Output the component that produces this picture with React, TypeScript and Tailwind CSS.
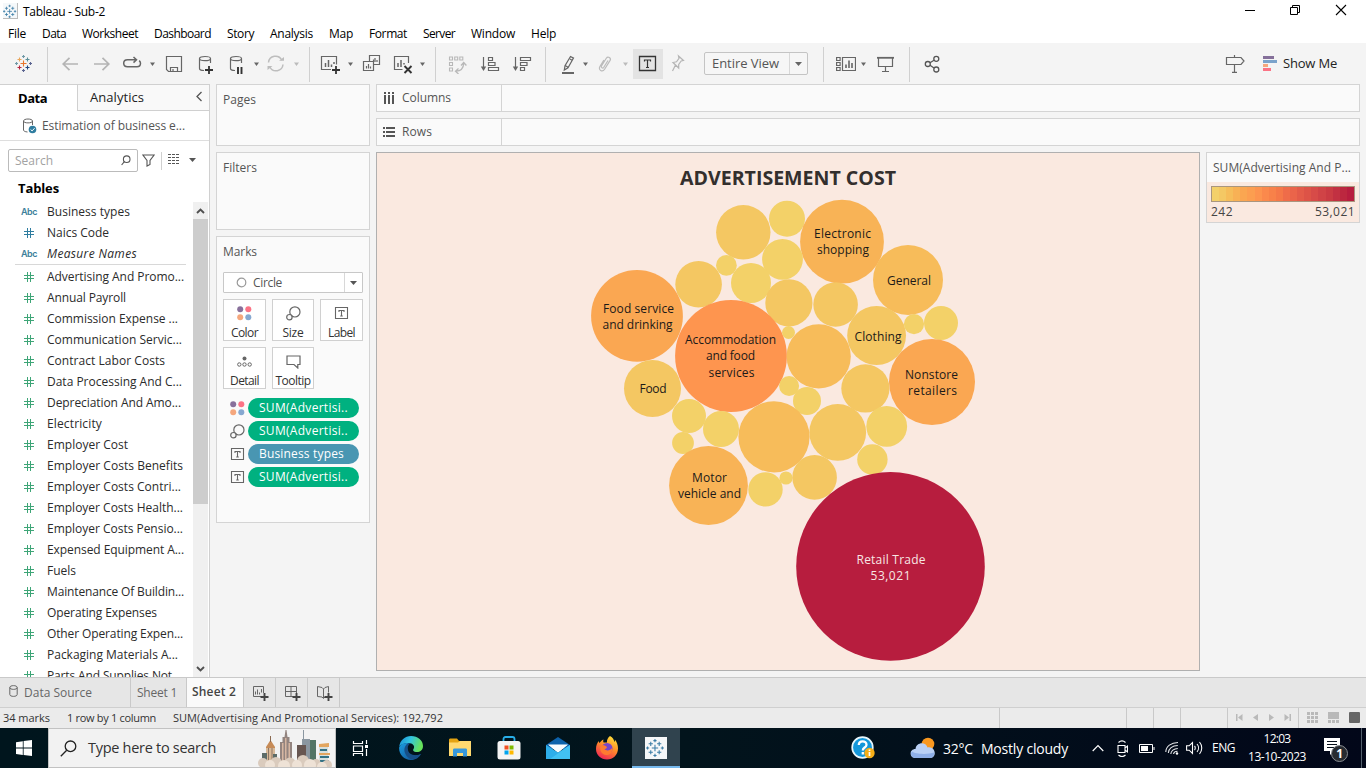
import React, { useLayoutEffect, useRef } from "react";

/* Text that spreads its letters to fill a given width. */
function Fit({ w, className = "", children }: { w: number; className?: string; children: string }) {
  const ref = useRef<HTMLSpanElement>(null);
  useLayoutEffect(() => {
    const el = ref.current;
    if (!el) return;
    el.style.letterSpacing = "0px";
    const natural = el.getBoundingClientRect().width;
    el.style.letterSpacing = `${(w - natural) / children.length}px`;
  }, [w, children]);
  return (
    <span ref={ref} className={`inline-block shrink-0 whitespace-pre ${className}`}>
      {children}
    </span>
  );
}

function Icon({ className = "", w = 20, h = 20, children }: { className?: string; w?: number; h?: number; children: React.ReactNode }) {
  return (
    <svg className={`shrink-0 ${className}`} width={w} height={h} viewBox={`0 0 ${w} ${h}`} fill="none" stroke="#666" strokeWidth="1.2">
      {children}
    </svg>
  );
}

function Caret({ className = "", color = "#666" }: { className?: string; color?: string }) {
  return (
    <svg className={`shrink-0 ${className}`} width="5" height="20" viewBox="0 0 5 20">
      <path d="M0 8.5h5L2.5 12z" fill={color} />
    </svg>
  );
}

const Sep = ({ className = "" }: { className?: string }) => <div className={`-mt-[7px] h-[35px] w-px shrink-0 bg-[#d0d0d0] ${className}`} />;

function TableauMark({ size, mono, className = "" }: { size: number; mono?: boolean; className?: string }) {
  const plus = (x: number, y: number, r: number, c: string) => (
    <path key={`${x}-${y}`} d={`M${x - r} ${y}h${2 * r}M${x} ${y - r}v${2 * r}`} stroke={mono ? "#3a7ca5" : c} strokeWidth={mono ? 1 : 1.1} />
  );
  return (
    <svg className={`shrink-0 ${className}`} width={size} height={size} viewBox="0 0 18 18" fill="none">
      {plus(8.5, 9.5, 3, "#e8762c")}
      {plus(4.5, 5.5, 2, "#e8a55a")}
      {plus(12.5, 5.5, 2, "#5b8f98")}
      {plus(4.5, 13.5, 2, "#b5243e")}
      {plus(12.5, 13.5, 2, "#1f457e")}
      {plus(8.5, 2.5, 1.5, "#7099a6")}
      {plus(8.5, 16.5, 1.5, "#5b6591")}
      {plus(1.5, 9.5, 1.5, "#7099a6")}
      {plus(15.5, 9.5, 1.5, "#5b6591")}
    </svg>
  );
}

const MENU: [string, number, string][] = [
  ["File", 18, "ml-[8px]"], ["Data", 24, "ml-[16px]"], ["Worksheet", 56, "ml-[16px]"], ["Dashboard", 57, "ml-[16px]"],
  ["Story", 27, "ml-[16px]"], ["Analysis", 43, "ml-[16px]"], ["Map", 24, "ml-[16px]"], ["Format", 38, "ml-[16px]"],
  ["Server", 32, "ml-[16px]"], ["Window", 44, "ml-[16px]"], ["Help", 25, "ml-[16px]"],
];

function TitleAndMenu() {
  return (
    <div className="h-[43px] bg-white text-[12px] text-black">
      <div className="flex h-[22px] items-start">
        <div className="ml-[3px] mt-[3px] flex h-[16px] w-[15px] items-center justify-center border-b border-r border-[#bbb] bg-[#f5f8fa]">
          <TableauMark size={14} mono />
        </div>
        <Fit w={82} className="ml-[5px] mt-[3px] leading-[17px]">Tableau - Sub-2</Fit>
        <Icon className="ml-auto mt-[5px]" w={12} h={12}><path d="M1 5.5h10" stroke="#000" strokeWidth="1" /></Icon>
        <Icon className="ml-[33px] mt-[4px]" w={12} h={12}><path d="M1.5 3.5h7v7h-7zM3.5 3.5v-2h7v7h-2" stroke="#000" strokeWidth="1" /></Icon>
        <Icon className="ml-[34px] mr-[19px] mt-[4px]" w={12} h={12}><path d="M1 1l10 10M11 1L1 11" stroke="#000" strokeWidth="1.1" /></Icon>
      </div>
      <div className="flex h-[21px] items-start">
        {MENU.map(([t, w, c]) => (
          <Fit key={t} w={w} className={`leading-[23px] ${c}`}>{t}</Fit>
        ))}
      </div>
    </div>
  );
}

const Plus = ({ x, y }: { x: number; y: number }) => <path d={`M${x - 4} ${y}h8M${x} ${y - 4}v8`} stroke="#333" strokeWidth="1.8" />;

function Toolbar() {
  return (
    <div className="flex h-[41px] items-start bg-[#f4f4f4] pt-[11px]">
      <TableauMark size={18} className="ml-[15px]" />
      <Sep className="ml-[14px]" />
      <Icon className="ml-[12px]"><path d="M18 10H3.5M9.5 3.8L3.2 10l6.3 6.2" stroke="#b4b4b4" strokeWidth="1.7" /></Icon>
      <Icon className="ml-[12px]"><path d="M2 10h14.500M10.500 3.800L16.800 10l-6.300 6.200" stroke="#b4b4b4" strokeWidth="1.7" /></Icon>
      <Icon className="ml-[10px]"><path d="M14.500 5.800H5.500c-2.500 0-3.800 1.500-3.800 3.500s1.300 3.500 3.800 3.500h9.500c2.200 0 3.500-1.400 3.500-3.500 0-1.200-.5-2-1.300-2.700M11.500 3l3 2.800-3 2.800" strokeWidth="1.500" /></Icon>
      <Caret className="ml-[8px]" />
      <Icon className="ml-[9px]"><path d="M2.500 2.500h15v15h-13l-2-2zM6.500 17v-3.500h7V17M9 15v2" /></Icon>
      <Icon className="ml-[11px]">
        <path d="M15.500 9V4.500M4.500 4.500v10c0 1.200 2 2 4.500 2M4.500 4.500c0-1.300 2.400-2 5.500-2s5.500.7 5.500 2-2.400 2.200-5.500 2.200-5.500-.9-5.500-2.200z" />
        <Plus x={14} y={16} />
      </Icon>
      <Icon className="ml-[12px]">
        <path d="M14.500 9V4.500M3.500 4.500v10c0 1.200 2 2 4.500 2M3.500 4.500c0-1.300 2.400-2 5.500-2s5.500.7 5.500 2-2.400 2.200-5.500 2.200-5.500-.9-5.500-2.200z" />
        <path d="M11 13v7M14.500 13v7" stroke="#333" strokeWidth="1.900" />
      </Icon>
      <Caret className="ml-[7px]" />
      <Icon className="ml-[7px]">
        <path d="M2.500 8.500A7 7 0 0 1 15.800 6.200M17 10.500A7 7 0 0 1 3.800 13" stroke="#bdbdbd" strokeWidth="1.500" />
        <path d="M13 6.800h5V3zM6.500 12h-5v4z" fill="#bdbdbd" stroke="none" />
      </Icon>
      <Caret className="ml-[8px]" color="#bbb" />
      <Sep className="ml-[10px]" />
      <Icon className="ml-[10px]">
        <path d="M11 15.500H1.500v-13h15v8" /><path d="M5.500 13V9M8.500 13V6M11.500 13v-2.500M14 10V8" strokeWidth="1.500" /><Plus x={16} y={16} />
      </Icon>
      <Caret className="ml-[8px]" />
      <Icon className="ml-[9px]">
        <path d="M7.500 7V1.500h10v9h-5.500M1.500 7.500h10v9h-10zM4.500 14.500v-2.500M6.500 14.500V10M8.500 14.500v-2M11.500 7V5.500M13 8V4M15 8V6" />
      </Icon>
      <Icon className="ml-[11px]">
        <path d="M9.500 15.500h-8v-13h14v6.500" /><path d="M5 13V9M8 13V6M11 10.500V9" strokeWidth="1.500" /><path d="M11.500 12l7 7M18.500 12l-7 7" stroke="#333" strokeWidth="1.900" />
      </Icon>
      <Caret className="ml-[7px]" />
      <Sep className="ml-[10px]" />
      <Icon className="ml-[11px]">
        <path d="M2.500 3h3v3h-3zM7.700 3h3v3h-3zM12.800 3h3v3h-3zM2.500 8.500h3v3h-3zM2.500 14h3v3h-3z" stroke="#b8b8b8" strokeWidth="1.100" />
        <path d="M9 17.200c4.500-.2 7.500-3 7.700-8M11.500 14.500L8.500 17.200l3 2.800M14 11.500l2.700-3 2.700 3" stroke="#b8b8b8" strokeWidth="1.300" />
      </Icon>
      <Icon className="ml-[13px]">
        <path d="M3.500 3v12" /><path d="M.8 12.500h5.400L3.500 17z" fill="#666" stroke="none" />
        <path d="M8.500 3.500h4v3h-4zM8.500 8.500h6.500v3H8.500zM8.500 13.500h10v3h-10z" />
      </Icon>
      <Icon className="ml-[12px]">
        <path d="M3.500 3v12" /><path d="M.8 12.500h5.400L3.500 17z" fill="#666" stroke="none" />
        <path d="M8.500 3.500h10v3h-10zM8.500 8.500H15v3H8.500zM8.500 13.500h4v3h-4z" />
      </Icon>
      <Sep className="ml-[13px]" />
      <Icon className="ml-[12px]">
        <path d="M12.500 2.500l3 1.600-5.500 9.600-3.700 2.300.7-4.200zM7.200 11.500l2.900 1.700M12 5l2 1.200" /><path d="M4 19h12" strokeWidth="2" />
      </Icon>
      <Caret className="ml-[5px]" />
      <Icon className="ml-[7px]">
        <path d="M13 6.500l-4.200 6.800c-1 1.500-3.200.3-2.300-1.300l4.800-7.800c1.600-2.500 5.200-.3 3.800 2.200l-5.500 8.800c-2.200 3.400-6.700.7-4.700-2.700l4-6.500" stroke="#bbb" />
      </Icon>
      <Caret className="ml-[8px]" color="#bbb" />
      <div className="-mt-[5px] ml-[5px] h-[30px] w-[30px] bg-[#e3e3e3] pl-[5px] pt-[5px]">
        <Icon><path d="M1.500 2.500h16v14h-16z" stroke="#333" strokeWidth="1.300" /><path d="M6.500 7.500V6h6v1.500M9.500 6v7.500M8 13.500h3" stroke="#333" /></Icon>
      </div>
      <Icon className="ml-[4px]">
        <path d="M11.500 2l5 4.500-2.300.5-2.500 3.500v3.500L6 8.500l3.500-.7 2.500-3.500zM8.500 11L5.500 17" stroke="#b5b5b5" />
      </Icon>
      <div className="-mt-[2px] ml-[17px] flex h-[23px] w-[104px] rounded-[2px] border border-[#c4c4c4] bg-[#f6f6f6]">
        <Fit w={67} className="ml-[7px] text-[13px] leading-[20px] text-[#555]">Entire View</Fit>
        <div className="ml-[10px] flex flex-1 items-center justify-center border-l border-[#d8d8d8]">
          <svg width="7" height="4" viewBox="0 0 7 4"><path d="M0 0h7L3.500 4z" fill="#666" /></svg>
        </div>
      </div>
      <Sep className="ml-[15px]" />
      <Icon className="ml-[12px]">
        <path d="M.6 3.500h3.500v3H.6zM.6 8.500h3.500v3H.6zM.6 13.500h3.500v3H.6zM6.500 3.500h13v13h-13z" /><path d="M10 14v-3.500M13 14V6.500M16 14V9" strokeWidth="1.600" />
      </Icon>
      <Caret className="ml-[5px]" />
      <Icon className="ml-[10px]"><path d="M1 3.800h17" strokeWidth="1.800" /><path d="M2.500 4v8.500h14V4M9.500 12.500v5M6 17.500h7" /></Icon>
      <Sep className="ml-[13px]" />
      <Icon className="ml-[12px]">
        <g stroke="#555" strokeWidth="1.300"><circle cx="5.800" cy="10" r="2.500" /><circle cx="14.300" cy="4.800" r="2.500" /><circle cx="14.300" cy="15.500" r="2.500" /><path d="M8 8.700l4-2.500M8 11.300l4 2.700" /></g>
      </Icon>
      <Icon className="ml-auto"><path d="M9.500 1v2M1.500 3.500h14.500l3 3.500-3 3.500H1.500zM9.500 10.500v7.500M7 18.400h5" /></Icon>
      <div className="ml-[18px] mt-[2px] flex w-[14px] flex-col gap-px">
        <div className="h-[3px] w-[11px] bg-[#85709a]" />
        <div className="h-[3px] w-[14px] bg-[#7ba3cb]" />
        <div className="h-[3px] w-[5px] bg-[#f5a77d]" />
        <div className="h-[3px] w-[8px] bg-[#fb7385]" />
      </div>
      <Fit w={54} className="ml-[6px] mr-[29px] text-[13px] leading-[19px] text-[#222]">Show Me</Fit>
    </div>
  );
}

const HashIcon = ({ color }: { color: string }) => (
  <svg className="ml-[24px] mr-[13px] shrink-0" width="10" height="10" viewBox="0 0 10 10">
    <path d="M3.500 0v10M6.500 0v10M0 3.500h10M0 6.500h10" stroke={color} strokeWidth="1" />
  </svg>
);

const DIMENSIONS: [string, number, string][] = [["Business types", 83, "abc"], ["Naics Code", 62, "num"], ["Measure Names", 90, "italic"]];
const MEASURES: [string, number][] = [
  ["Advertising And Promo...", 137], ["Annual Payroll", 79], ["Commission Expense ...", 131], ["Communication Servic...", 135],
  ["Contract Labor Costs", 118], ["Data Processing And C...", 135], ["Depreciation And Amo...", 134], ["Electricity", 55],
  ["Employer Cost", 81], ["Employer Costs Benefits", 136], ["Employer Costs Contri...", 134], ["Employer Costs Health...", 136],
  ["Employer Costs Pensio...", 136], ["Expensed Equipment A...", 137], ["Fuels", 29], ["Maintenance Of Buildin...", 137],
  ["Operating Expenses", 110], ["Other Operating Expen...", 136], ["Packaging Materials A...", 131], ["Parts And Supplies Not ...", 137],
];

function DataPane() {
  return (
    <aside className="flex h-[593px] w-[210px] shrink-0 flex-col border-r border-t border-[#d0d0d0] bg-white">
      <div className="flex h-[26px] shrink-0">
        <div className="w-[77px]"><Fit w={29} className="ml-[18px] text-[13px] font-bold leading-[25px] text-black">Data</Fit></div>
        <div className="flex flex-1 items-start border-b border-l border-[#d0d0d0] bg-[#f9f9f9]">
          <Fit w={54} className="ml-[12px] text-[13px] leading-[25px] text-[#222]">Analytics</Fit>
          <svg className="ml-auto mr-[6px] mt-[6px]" width="8" height="11" viewBox="0 0 8 11"><path d="M6.500 1L2 5.500 6.500 10" fill="none" stroke="#555" strokeWidth="1.300" /></svg>
        </div>
      </div>
      <div className="flex h-[30px] shrink-0 items-center border-b border-[#dedede]">
        <svg className="ml-[22px] mt-px" width="15" height="16" viewBox="0 0 15 16" fill="none" stroke="#666">
          <path d="M10.500 7V3M1.500 3v9c0 1 1.500 1.800 4 2M1.500 3c0-1.200 2-2 4.500-2s4.500.8 4.500 2-2 1.900-4.500 1.900S1.500 4.200 1.500 3z" />
          <circle cx="10.500" cy="11.500" r="3.800" fill="#2f7da0" stroke="none" /><path d="M8.600 11.500l1.500 1.400 2.500-2.700" stroke="#fff" />
        </svg>
        <Fit w={143} className="ml-[5px] text-[12px] leading-[28px] text-[#555]">Estimation of business e...</Fit>
      </div>
      <div className="mt-[8px] flex h-[23px] shrink-0 items-center">
        <div className="ml-[8px] flex h-[23px] w-[130px] items-center rounded-[2px] border border-[#bbb]">
          <Fit w={38} className="ml-[6px] text-[12px] leading-[20px] text-[#a2a2a2]">Search</Fit>
          <svg className="ml-auto mr-[6px]" width="10" height="11" viewBox="0 0 10 11" fill="none" stroke="#555" strokeWidth="1.100"><circle cx="5.700" cy="4.200" r="3.300" /><path d="M3.400 6.700L.6 10" /></svg>
        </div>
        <svg className="ml-[4px]" width="13" height="13" viewBox="0 0 13 13" fill="none" stroke="#555" strokeWidth="1.100"><path d="M.9 1h11.200L8 6.500v4L5 12V6.500z" /></svg>
        <div className="ml-[6px] h-[18px] w-px bg-[#d0d0d0]" />
        <svg className="-mt-[3px] ml-[6px]" width="12" height="10" viewBox="0 0 12 10" stroke="#555"><path d="M0 .5h12M0 3.500h12M0 6.500h12M0 9.500h12" strokeDasharray="3 1" /></svg>
        <svg className="-mt-px ml-[9px]" width="7" height="4" viewBox="0 0 7 4"><path d="M0 0h7L3.500 4z" fill="#555" /></svg>
      </div>
      <Fit w={41} className="ml-[18px] mt-[7px] self-start text-[13px] font-bold leading-[18px] text-black">Tables</Fit>
      <div className="mt-[5px] flex min-h-0 flex-1">
        <div className="w-[193px] overflow-hidden text-[12px] text-[#2b2b2b]">
          <div className="-mt-px">
            {DIMENSIONS.map(([t, w, k]) => (
              <div key={t} className="flex h-[21px] items-center">
                {k === "num" ? <HashIcon color="#2f7da0" /> : <Fit w={16} className="ml-[21px] mr-[10px] pt-px font-[Inter] text-[9px] font-semibold text-[#3d7f9b]">Abc</Fit>}
                <Fit w={w} className={k === "italic" ? "italic leading-[21px]" : "leading-[21px]"}>{t}</Fit>
              </div>
            ))}
          </div>
          <div className="ml-[15px] mr-[7px] mb-px h-px bg-[#d8d8d8]" />
          {MEASURES.map(([t, w]) => (
            <div key={t} className="flex h-[21px] items-center">
              <HashIcon color="#3ea577" />
              <Fit w={w} className="leading-[21px]">{t}</Fit>
            </div>
          ))}
        </div>
        <div className="flex w-[15px] flex-col bg-[#f0f0f0]">
          <svg width="15" height="17" viewBox="0 0 15 17"><path d="M4 11l3.500-3.500L11 11" fill="none" stroke="#505050" strokeWidth="1.900" /></svg>
          <div className="h-[285px] bg-[#cdcdcd]" />
          <svg className="mt-auto" width="15" height="16" viewBox="0 0 15 16"><path d="M4 6l3.500 3.500L11 6" fill="none" stroke="#505050" strokeWidth="1.900" /></svg>
        </div>
      </div>
    </aside>
  );
}

const ColorDots = () => (
  <svg width="15" height="15" viewBox="0 0 15 15"><circle cx="3.200" cy="3.200" r="3" fill="#88709b" /><circle cx="11.300" cy="3.200" r="3" fill="#fb7385" /><circle cx="3.200" cy="11.300" r="3" fill="#f5a77d" /><circle cx="11.300" cy="11.300" r="3" fill="#86a8d0" /></svg>
);
const SizeIcon = () => (
  <svg width="15" height="15" viewBox="0 0 15 15" fill="none" stroke="#666" strokeWidth="1.200"><circle cx="8.900" cy="5.900" r="5.100" /><circle cx="3.400" cy="11.200" r="2.700" fill="#fafafa" /></svg>
);
const TextIcon = () => (
  <svg width="15" height="15" viewBox="0 0 15 15" fill="none" stroke="#666" strokeWidth="1.100"><path d="M1.500 1.500h12v11h-12zM5 6V4.500h5V6M7.500 4.500V10M6.200 10h2.600" /></svg>
);

function MarkButton({ label, w, icon }: { label: string; w: number; icon: React.ReactNode }) {
  return (
    <div className="flex h-[42px] flex-col items-center border border-[#d0d0d0] bg-white pt-[6px]">
      {icon}
      <Fit w={w} className="mt-[4px] text-[12px] leading-[15px] text-[#333]">{label}</Fit>
    </div>
  );
}

const card = "border border-[#d4d4d4] bg-[#fafafa]";
const PILLS: [string, number, React.ReactNode, string][] = [
  ["SUM(Advertisi..", 89, <ColorDots />, "bg-[#00b180]"], ["SUM(Advertisi..", 89, <SizeIcon />, "bg-[#00b180]"],
  ["Business types", 85, <TextIcon />, "bg-[#4996b2]"], ["SUM(Advertisi..", 89, <TextIcon />, "bg-[#00b180]"],
];

function Cards() {
  return (
    <div className="ml-[6px] flex w-[154px] shrink-0 flex-col gap-[6px] text-[12px] text-[#555]">
      <div className={`h-[62px] ${card}`}><Fit w={33} className="ml-[6px] mt-[6px] leading-[18px]">Pages</Fit></div>
      <div className={`h-[78px] ${card}`}><Fit w={34} className="ml-[6px] mt-[6px] leading-[18px]">Filters</Fit></div>
      <div className={`flex h-[287px] flex-col px-[6px] ${card}`}>
        <Fit w={34} className="mt-[6px] self-start leading-[18px]">Marks</Fit>
        <div className="mt-[11px] flex h-[21px] items-center rounded-[1px] border border-[#c8c8c8] bg-white">
          <svg className="ml-[12px]" width="11" height="11" viewBox="0 0 11 11"><circle cx="5.500" cy="5.500" r="4.300" fill="none" stroke="#999" strokeWidth="1.200" /></svg>
          <Fit w={29} className="ml-[6px] leading-[19px]">Circle</Fit>
          <div className="ml-auto flex h-full w-[18px] items-center justify-center border-l border-[#d8d8d8]">
            <svg width="7" height="4" viewBox="0 0 7 4"><path d="M0 0h7L3.500 4z" fill="#555" /></svg>
          </div>
        </div>
        <div className="mt-[6px] grid grid-cols-[43px_42px_43px] gap-[6px]">
          <MarkButton label="Color" w={27} icon={<ColorDots />} />
          <MarkButton label="Size" w={21} icon={<SizeIcon />} />
          <MarkButton label="Label" w={27} icon={<TextIcon />} />
          <MarkButton label="Detail" w={29} icon={<svg width="15" height="15" viewBox="0 0 15 15"><circle cx="7.500" cy="4.500" r="2" fill="#666" /><g fill="none" stroke="#666"><circle cx="2.300" cy="10.500" r="1.700" /><circle cx="7.500" cy="10.500" r="1.700" /><circle cx="12.700" cy="10.500" r="1.700" /></g></svg>} />
          <MarkButton label="Tooltip" w={35} icon={<svg width="15" height="15" viewBox="0 0 15 15"><path d="M1 2h13v8.500h-2.200V14L8 10.500H1z" fill="none" stroke="#666" strokeWidth="1.200" /></svg>} />
        </div>
        <div className="mt-[9px] flex flex-col gap-[3px]">
          {PILLS.map(([t, w, icon, bg], i) => (
            <div key={i} className="flex h-[20px] items-center pl-[7px]">
              {icon}
              <div className={`ml-[3px] h-[20px] w-[111px] rounded-full pl-[11px] ${bg}`}>
                <Fit w={w} className="text-[12px] font-medium leading-[19px] text-white">{t}</Fit>
              </div>
            </div>
          ))}
        </div>
      </div>
    </div>
  );
}

const Y = "#f3d168", G = "#f4c762", A = "#f7bc5a", O = "#f8b356", D = "#faa752";
const BUBBLES: [number, number, number, string][] = [
  [743.3, 232.3, 27.200, G], [787, 218.700, 18, Y], [842, 241.700, 41.900, O], [782.500, 259.300, 20.400, Y], [726.400, 265.400, 10.400, Y],
  [751, 283, 20, Y], [698.600, 284.300, 23.300, G], [637, 315.900, 45.900, D], [908, 280, 35, A], [788.900, 302.900, 23.600, G],
  [835.600, 304.500, 22.300, G], [731, 356, 55.900, "#fe954f"], [876.600, 335.500, 29.400, G], [914, 324.100, 10.100, Y], [941, 323, 17, Y],
  [788.500, 332.500, 6.500, Y], [818.700, 356.400, 32.100, A], [932, 382, 43, D], [652.500, 388.500, 28.500, G], [789.100, 386, 10, Y],
  [807, 401, 14, Y], [865.400, 388.400, 24.100, G], [689, 416, 17, Y], [721, 429, 18, Y], [774, 436.800, 35.600, A],
  [837.700, 432.400, 28.400, G], [886.700, 426.400, 20.400, Y], [683, 443, 10.900, Y], [708.500, 485.500, 39.400, O], [765.500, 489.400, 17.200, Y],
  [786, 478, 6.600, Y], [814.600, 477.400, 22.300, G], [872.400, 459.500, 15.200, Y], [890.500, 566.400, 94.300, "#b71d3e"],
];
const LABELS: [string, number, number, number][] = [
  ["Electronic", 842.500, 238, 57], ["shopping", 843, 254, 52], ["General", 909, 285, 44], ["Food service", 638.500, 313, 71], ["and drinking", 637.500, 329, 70],
  ["Accommodation", 730.500, 344, 91], ["and food", 730.500, 360, 49], ["services", 731.500, 377, 46], ["Clothing", 878, 341, 47], ["Nonstore", 931.500, 379, 53],
  ["retailers", 932.500, 395, 49], ["Food", 653, 393, 27], ["Motor", 709.500, 482, 35], ["vehicle and", 709.500, 498, 63],
  ["Retail Trade", 891, 564, 69], ["53,021", 890.500, 580, 40],
];

function View() {
  return (
    <div className="h-[519px] border border-[#b0b0b0] bg-[#fae9e0]">
      <svg width="822" height="517" viewBox="377 153 822 517" className="block font-[Open_Sans]">
        <text x="680" y="185" fontSize="19.500" fontWeight="bold" fill="#332f2d" textLength="216" lengthAdjust="spacingAndGlyphs">ADVERTISEMENT COST</text>
        {BUBBLES.map(([x, y, r, c], i) => <circle key={i} cx={x} cy={y} r={r} fill={c} />)}
        {LABELS.map(([t, x, y, w], i) => (
          <text key={t} x={x - w / 2} y={y} fontSize="12" textLength={w} fill={i > 13 ? "#f7e6e4" : "#1c1a18"}>{t}</text>
        ))}
      </svg>
    </div>
  );
}

function Shelf({ label, w, icon }: { label: string; w: number; icon: React.ReactNode }) {
  return (
    <div className={`flex h-[28px] ${card}`}>
      <div className="flex w-[125px] items-center border-r border-[#d4d4d4] pl-[6px]">
        {icon}
        <Fit w={w} className="ml-[7px] text-[12px] leading-[24px] text-[#555]">{label}</Fit>
      </div>
    </div>
  );
}

const RAMP = ["bg-[#f3d06a]", "bg-[#f4c864]", "bg-[#f6bd5a]", "bg-[#f8b155]", "bg-[#faa651]", "bg-[#fc9e50]", "bg-[#fd944f]", "bg-[#fb894c]", "bg-[#f88149]", "bg-[#f57848]", "bg-[#ef6c49]", "bg-[#ea644a]", "bg-[#e35b49]", "bg-[#dd5347]", "bg-[#d74b48]", "bg-[#d04346]", "bg-[#ca3b43]", "bg-[#c23142]", "bg-[#bc273f]", "bg-[#b71d3e]"];

function Workspace() {
  return (
    <div className="ml-[6px] flex w-[984px] flex-col gap-[6px]">
      <Shelf label="Columns" w={49} icon={<svg width="12" height="12" viewBox="0 0 12 12" stroke="#555" strokeWidth="2"><path d="M2 0v2M6 0v2M10 0v2M2 3v9M6 3v9M10 3v9" /></svg>} />
      <Shelf label="Rows" w={30} icon={<svg width="12" height="12" viewBox="0 0 12 12" stroke="#555" strokeWidth="2"><path d="M0 2h2M0 6h2M0 10h2M3 2h9M3 6h9M3 10h9" /></svg>} />
      <div className="grid grid-cols-[824px_154px] items-start gap-[6px]">
        <View />
        <div className={`flex h-[71px] flex-col ${card}`}>
          <Fit w={138} className="ml-[6px] mt-[6px] self-start text-[12px] leading-[18px] text-[#555]">SUM(Advertising And P...</Fit>
          <div className="mt-auto h-[40px] bg-[#fae9e0] px-[4px] pt-[4px]">
            <div className="flex h-[16px] border border-[#a9967f]">
              {RAMP.map((c) => <div key={c} className={`flex-1 ${c}`} />)}
            </div>
            <div className="flex justify-between text-[12px] leading-[19px] text-[#444]">
              <Fit w={22}>242</Fit><Fit w={40}>53,021</Fit>
            </div>
          </div>
        </div>
      </div>
    </div>
  );
}

const addIcons = ["chart", "grid", "book"];

function SheetTabs() {
  return (
    <div className="flex h-[30px] border-t border-[#c9c9c9] bg-[#e6e6e6] text-[12px] text-[#666]">
      <div className="flex w-[131px] items-center border-r border-[#c9c9c9]">
        <svg className="-mt-[3px] ml-[9px]" width="9" height="12" viewBox="0 0 9 12" fill="none" stroke="#666"><path d="M.8 2.500v7c0 2.500 7.400 2.500 7.400 0v-7M.8 2.500c0-2.500 7.400-2.500 7.400 0s-7.400 2.500-7.400 0z" /></svg>
        <Fit w={68} className="ml-[6px] leading-[29px]">Data Source</Fit>
      </div>
      <div className="w-[56px] border-r border-[#c9c9c9] pl-[6px]"><Fit w={40} className="leading-[29px]">Sheet 1</Fit></div>
      <div className="w-[57px] border-r border-[#c9c9c9] bg-[#fafafa] pl-[5px]"><Fit w={44} className="font-semibold leading-[27px] text-[#444]">Sheet 2</Fit></div>
      {addIcons.map((k) => (
        <div key={k} className="flex w-[32px] items-center border-r border-[#c9c9c9] pl-[9px]">
          <svg width="16" height="16" viewBox="0 0 16 16" fill="none" stroke="#666">
            {k === "chart" && <path d="M8.500 11.500H.5v-10h10V8M2.500 9.500v-3M4.500 9.500v-5M6.500 9.500v-2M8.500 7.500V4" />}
            {k === "grid" && <path d="M8 11.500H.5v-10h11V8M.5 6.500h11M6 1.500v10" />}
            {k === "book" && <path d="M6.500 13V4L5 2.500 .5 1.500v10l4.500 .5L6.500 13.500 8 12M6.500 4L8 2.500l3.500-1V7.500" />}
            <path d="M7.500 12h8M11.500 8v8" stroke="#444" strokeWidth="1.900" />
          </svg>
        </div>
      ))}
    </div>
  );
}

function StatusBar() {
  return (
    <div className="flex h-[21px] border-t border-[#cfcfcf] bg-[#ebebeb] text-[11px] leading-[20px] text-[#333]">
      <Fit w={47} className="ml-[3px]">34 marks</Fit>
      <Fit w={89} className="ml-[17px]">1 row by 1 column</Fit>
      <Fit w={270} className="ml-[17px]">SUM(Advertising And Promotional Services): 192,792</Fit>
      <div className="ml-auto grid w-[367px] grid-cols-[127px_27px_27px_47px_71px_68px]">
        <div className="border-l border-[#c9c9c9]" /><div className="border-l border-[#c9c9c9]" /><div className="border-l border-[#c9c9c9]" /><div className="border-l border-[#c9c9c9]" />
        <div className="flex items-center justify-between border-l border-[#c9c9c9] pb-px pl-[8px] pr-[7px]">
          <svg width="7" height="7" viewBox="0 0 7 7" fill="#b9b9b9"><path d="M0 0h1.500v7H0zM6.500 0v7L2 3.500z" /></svg>
          <svg width="5" height="7" viewBox="0 0 5 7" fill="#b9b9b9"><path d="M5 0v7L0 3.500z" /></svg>
          <svg width="5" height="7" viewBox="0 0 5 7" fill="#b9b9b9"><path d="M0 0v7l5-3.500z" /></svg>
          <svg width="7" height="7" viewBox="0 0 7 7" fill="#b9b9b9"><path d="M5.500 0H7v7H5.500zM.5 0v7L5 3.500z" /></svg>
        </div>
        <div className="flex items-center gap-[10px] border-l border-[#c9c9c9] pb-px pl-[8px]">
          <svg width="11" height="11" viewBox="0 0 11 11" fill="#b9b9b9"><path d="M0 0h3v3H0zM4 0h3v3H4zM8 0h3v3H8zM0 4h3v3H0zM4 4h3v3H4zM8 4h3v3H8zM0 8h3v3H0zM4 8h3v3H4zM8 8h3v3H8z" /></svg>
          <svg width="11" height="11" viewBox="0 0 11 11" fill="#b9b9b9"><path d="M0 0h11v7H0zM0 8h3v3H0zM4 8h3v3H4zM8 8h3v3H8z" /></svg>
          <div className="h-[11px] w-[11px] rounded-[1px] bg-[#666]" />
        </div>
      </div>
    </div>
  );
}

function City() {
  return (
    <svg className="ml-auto shrink-0" width="79" height="38" viewBox="0 0 79 38">
      <path d="M10 18l4.500-7L19 18v4h-9z" fill="#c68b57" /><path d="M14 7h1v6h-1z" fill="#8b6a50" /><path d="M10 19h9v17h-9z" fill="#d8b998" /><path d="M12 19h1v17h-1zM15.500 19h1v17h-1z" fill="#8d7765" />
      <path d="M6 24h5v12H6zM17 25h4v11h-4z" fill="#5d6c68" />
      <path d="M29.500 1h1l1 7h2v5h2.500v24H24V13h2.500V8h2z" fill="#93847f" /><path d="M26 14h1.500v22H26zM29 9h1.500v27H29zM32.500 14H34v22h-1.500z" fill="#d6b6a2" />
      <path d="M47 1h1v10h-1zM46 10h8v25h-8z" fill="#8a96a0" /><path d="M54 11h6v24h-6z" fill="#527565" /><path d="M41 16h9v19h-9z" fill="#675651" />
      <path d="M63 16l9-2v22h-9z" fill="#d7e0de" /><path d="M63 15l10-1v4H63zM63 24h11v2H63z" fill="#e3a660" /><path d="M64 20h7v2h-7zM64 27h9v2h-9zM64 31h9v2h-9z" fill="#357386" />
      <g fill="#dacbbd"><circle cx="7" cy="34" r="5" /><circle cx="20" cy="34" r="6" /><circle cx="34" cy="34" r="5.500" /><circle cx="47" cy="32" r="6" /><circle cx="60" cy="35" r="5" /><circle cx="71" cy="36" r="5" /></g>
      <g fill="#eee2d6"><circle cx="14" cy="36" r="5" /><circle cx="28" cy="37" r="6" /><circle cx="41" cy="36" r="5" /><circle cx="54" cy="36" r="6" /><circle cx="66" cy="38" r="5" /></g>
    </svg>
  );
}

function Taskbar() {
  const cell = "flex h-[40px] w-[49px] items-center justify-center";
  return (
    <div className="flex h-[40px] items-center bg-linear-to-r from-[#00151d] via-[#02141c] to-[#020719] text-white">
      <div className="flex w-[48px] justify-center">
        <svg width="16" height="16" viewBox="0 0 16 16" fill="#fff"><path d="M0 2.200L6.800 1.200V7.600H0zM7.600 1.100L16 0v7.600H7.600zM0 8.400h6.800v6.500L0 13.900zM7.600 8.400H16V16l-8.400-1.100z" /></svg>
      </div>
      <div className="flex h-[40px] w-[288px] items-center border border-[#c2c2c2] bg-[#f2f2f2]">
        <svg className="ml-[11px] shrink-0" width="17" height="17" viewBox="0 0 17 17" fill="none" stroke="#222" strokeWidth="1.300"><circle cx="10.500" cy="6.300" r="5.300" /><path d="M6.700 10.200L.8 16.200" /></svg>
        <Fit w={128} className="ml-[11px] text-[14.500px] leading-[38px] text-[#333]">Type here to search</Fit>
        <City />
      </div>
      <div className="flex w-[48px] justify-center">
        <svg width="17" height="17" viewBox="0 0 17 17" fill="none" stroke="#fff" strokeWidth="1.200"><path d="M1.500 1v2.500h9V1M1.500 6h9v5.500h-9zM1.500 16v-2.500h9V16M14.500 0v4M14.500 9v7" /><path d="M13 5h3v3h-3z" fill="#fff" stroke="none" /></svg>
      </div>
      <div className={`ml-[2px] ${cell}`}>
        <svg width="24" height="24" viewBox="0 0 24 24">
          <defs>
            <linearGradient id="eg" x1="0" x2="1" y1="0" y2=".3"><stop offset="0" stopColor="#1689d8" /><stop offset=".5" stopColor="#33c5df" /><stop offset="1" stopColor="#67e25b" /></linearGradient>
            <linearGradient id="eb" x1="0" x2="1" y1="0" y2="1"><stop offset="0" stopColor="#1b9de2" /><stop offset="1" stopColor="#114a8b" /></linearGradient>
          </defs>
          <path d="M.2 11C1 4 6 0 12 0c7 0 12 4.500 12 10 0 4-3 6-6 6-3.500 0-4.500-1.500-3.500-3 2-3-1-6-5-6-4.500 0-8 2-9.300 4z" fill="url(#eg)" />
          <path d="M.1 11.500C2 7.500 6 6.500 9.500 7 8 8.500 7.500 11 8 14c1 5 8 7 14 4-2 3.700-5.500 6-10 6C5 24-.2 18.500.1 11.500z" fill="url(#eb)" />
          <path d="M9.500 7C6 9 4.500 13 6 17c1.300 3.500 4 5.700 7 6.500 4-.5 7-2.500 9-5.500-6 2.500-12 1-13-4-.6-3 0-5 2-6.500z" fill="#174f87" />
        </svg>
      </div>
      <div className={cell}>
        <svg width="22" height="20" viewBox="0 0 22 20"><path d="M0 2c0-1 .5-1.500 1.500-1.500H8L10 3h10.500c1 0 1.500.5 1.500 1.500V18H0z" fill="#e4a312" /><path d="M0 4.500h9L11 3h11v15H0z" fill="#ffd970" /><path d="M4 18.500V12c0-1 .5-1.500 1.500-1.500h11c1 0 1.500.5 1.500 1.500v6.500h-4V15H8v3.500z" fill="#3798dc" /></svg>
      </div>
      <div className={cell}>
        <svg width="24" height="24" viewBox="0 0 24 24"><path d="M6.500 5V3c0-1.300.7-2 2-2h7c1.300 0 2 .7 2 2v2" fill="none" stroke="#28aee8" strokeWidth="1.800" /><rect x=".5" y="5" width="23" height="18.500" rx="2.500" fill="#f4f4f4" /><path d="M7.500 9.500h4v4h-4z" fill="#f25022" /><path d="M12.500 9.500h4v4h-4z" fill="#7fba00" /><path d="M7.500 14.500h4v4h-4z" fill="#00a4ef" /><path d="M12.500 14.500h4v4h-4z" fill="#ffb900" /></svg>
      </div>
      <div className={cell}>
        <svg width="24" height="22" viewBox="0 0 24 22"><path d="M0 8L12 0l12 8v4H0z" fill="#0d62ab" /><path d="M2 7.500h20L12 16z" fill="#fff" /><path d="M0 8l12 7.500L24 8v14H0z" fill="#2eaeea" /><path d="M24 8v14H4z" fill="#4bc9f6" opacity=".7" /><path d="M3 8h18l-9 6.500z" fill="#f8fbfd" /></svg>
      </div>
      <div className={cell}>
        <svg width="24" height="24" viewBox="0 0 24 24">
          <defs><linearGradient id="ff" x1=".8" x2=".3" y1="0" y2="1"><stop offset="0" stopColor="#ffe63b" /><stop offset=".45" stopColor="#ff9128" /><stop offset="1" stopColor="#f12555" /></linearGradient></defs>
          <path d="M15 0c3 1.500 4 4 4.500 6 .5-.5.500-1.500.3-2.500C22 6 23 9 23 12.500 23 19 18 23.500 12 23.500S1 19 1 13c0-3.500 1-6 3-8 0 1 0 1.500.5 2C5.500 5.500 7 4 8.500 3.500 8 4.500 8 5.500 8.500 6.500h3.500C11.500 4 13 1.500 15 0z" fill="url(#ff)" />
          <circle cx="12" cy="12.500" r="5.500" fill="#7846c8" /><path d="M5.500 10c2-1.500 4-1 6 .5 1 .8 0 2.500-2 2.500 2 2.500 6 1.500 7.500-1 1 5-3 7.500-6 7-4-.5-6.500-4-5.500-9z" fill="#ff7b30" />
        </svg>
      </div>
      <div className="ml-px flex h-[40px] w-[48px] items-center justify-center border-b-2 border-[#76b9ed] bg-[#30434e]">
        <div className="mr-px mt-px flex h-[22px] w-[22px] items-center justify-center bg-[#f5f7f8]"><TableauMark size={19} mono /></div>
      </div>
      <svg className="ml-auto" width="25" height="24" viewBox="0 0 25 24"><circle cx="11.500" cy="11.500" r="10.300" fill="#1497da" stroke="#e8f6fb" strokeWidth="1.700" /><path d="M7.800 9c0-5 7.700-4.800 7.700-.3 0 3-3.700 2.700-3.700 5.700M11.800 16v2.500" fill="none" stroke="#fff" strokeWidth="2.300" /><circle cx="18.500" cy="17" r="5.200" fill="#f6ae17" /><path d="M18.500 13.500v1.500M18.500 16v4" stroke="#fff" strokeWidth="1.700" /></svg>
      <svg className="ml-[34px]" width="26" height="22" viewBox="0 0 26 22"><circle cx="18" cy="7" r="6.300" fill="#f99820" /><path d="M5.500 21C-1 21-1 12 5.500 12 6 5 16 4 17.500 10.500c8-1.500 10 9.500 3 10.500z" fill="#b9d0f5" /><path d="M5.500 21C1 21 0 17 2 14.500c3 3 17 3 22 1 .5 3-1 5.500-4 5.500z" fill="#8eafe8" /></svg>
      <Fit w={30} className="ml-[7px] text-[14px]">32°C</Fit>
      <Fit w={87} className="ml-[8px] text-[14px]">Mostly cloudy</Fit>
      <svg className="ml-[24px]" width="12" height="8" viewBox="0 0 12 8" fill="none" stroke="#fff" strokeWidth="1.200"><path d="M.7 7L6 1.500 11.300 7" /></svg>
      <svg className="ml-[13px]" width="11" height="17" viewBox="0 0 11 17" fill="none" stroke="#fff" strokeWidth="1.100"><path d="M1 5.500h7v7H1zM8 8l2.500-2v6L8 10M1.500 2.500c2-1.800 5-1.800 7 0M1.500 15c2 1.800 5 1.800 7 0" /></svg>
      <svg className="ml-[11px]" width="16" height="9" viewBox="0 0 16 9" fill="none" stroke="#fff"><path d="M.5.5h13v8H.5zM15 3v3" /><path d="M2 2h7v5H2z" fill="#fff" stroke="none" /></svg>
      <svg className="ml-[10px]" width="14" height="14" viewBox="0 0 14 14" fill="none" stroke="#e3e5e8" strokeWidth="1.100"><path d="M.8 11C1 5.500 6 1.500 13 1.500M3.300 12c.2-4.500 4-7.500 9.500-7.500M5.800 13c.2-3 3-5.500 7-5.500M8.500 13c.3-1.500 2-2.800 4-2.800" /><circle cx="12" cy="12.500" r="1.200" fill="#fff" stroke="none" /></svg>
      <svg className="ml-[7px]" width="17" height="14" viewBox="0 0 17 14" fill="none" stroke="#fff" strokeWidth="1.100"><path d="M.6 4.800h2.600L6.500 1.500v11L3.200 9.200H.6zM8.500 5c1 1 1 3 0 4M11 3c2 2.300 2 5.700 0 8M13.500 1c3 3.500 3 8.500 0 12" /></svg>
      <Fit w={23} className="ml-[9px] text-[12px]">ENG</Fit>
      <div className="ml-[13px] flex w-[58px] flex-col items-center text-[12px] leading-[18px]">
        <Fit w={27}>12:03</Fit><Fit w={58}>13-10-2023</Fit>
      </div>
      <svg className="ml-[18px] mr-[12px] mt-[4px]" width="25" height="26" viewBox="0 0 25 26">
        <path d="M0 1h16v13h-6l-4 4v-4H0z" fill="#fff" /><path d="M3 4.500h10M3 7.500h10M3 10.500h7" stroke="#07101b" />
        <circle cx="15.500" cy="16.500" r="8" fill="#272b31" stroke="#8a8e93" /><text x="12.300" y="21" fontSize="12" fontWeight="bold" fill="#fff">1</text>
      </svg>
      <div className="mr-[4px] h-[40px] w-px bg-[#53606c]" />
    </div>
  );
}

export default function App() {
  return (
    <div className="h-[768px] w-[1366px] overflow-hidden bg-[#f4f4f4] font-['Open_Sans','Noto_Sans',sans-serif]">
      <TitleAndMenu />
      <Toolbar />
      <div className="flex h-[593px]">
        <DataPane />
        <Cards />
        <Workspace />
      </div>
      <SheetTabs />
      <StatusBar />
      <Taskbar />
    </div>
  );
}
